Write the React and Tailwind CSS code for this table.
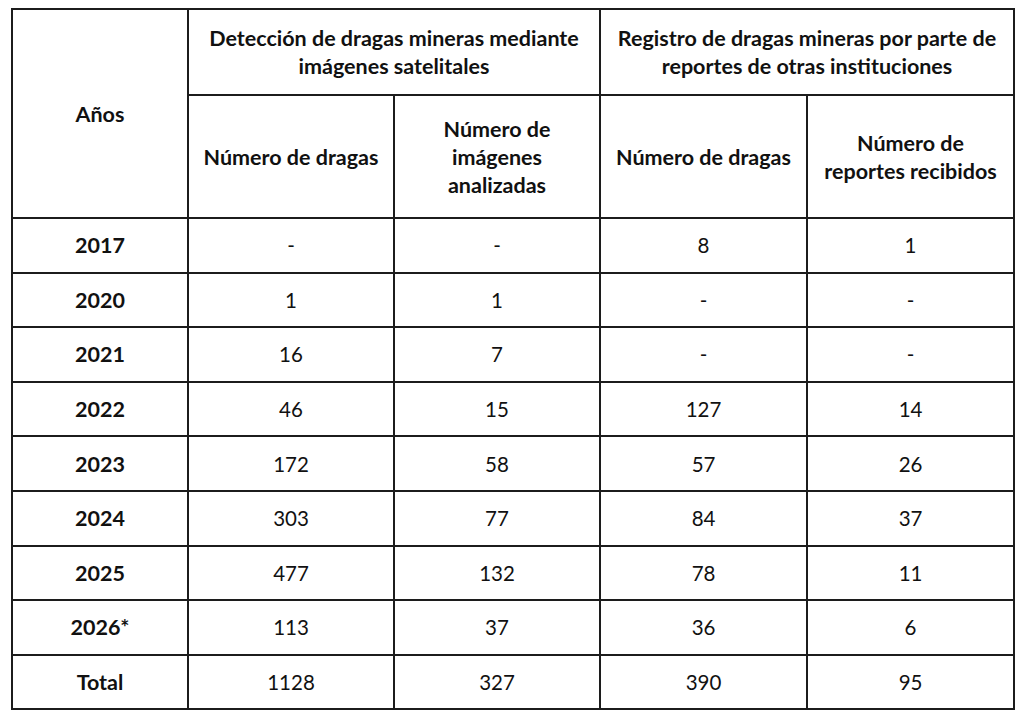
import React from "react";

const rows = [
  ["2017", "-", "-", "8", "1"],
  ["2020", "1", "1", "-", "-"],
  ["2021", "16", "7", "-", "-"],
  ["2022", "46", "15", "127", "14"],
  ["2023", "172", "58", "57", "26"],
  ["2024", "303", "77", "84", "37"],
  ["2025", "477", "132", "78", "11"],
  ["2026*", "113", "37", "36", "6"],
  ["Total", "1128", "327", "390", "95"],
];

const cell = "border-2 border-[#1c1c1c] text-center align-middle p-0";

export default function App() {
  return (
    <div
      className="w-[1024px] h-[717px] bg-white pt-[8px] pl-[11px] text-[#111] text-[20.5px] leading-[28px]"
      style={{ fontFamily: "Lato, 'Open Sans', sans-serif" }}
    >
      <table className="border-collapse table-fixed w-[1002px]">
        <colgroup>
          <col className="w-[176px]" />
          <col className="w-[206px]" />
          <col className="w-[206px]" />
          <col className="w-[207px]" />
          <col className="w-[207px]" />
        </colgroup>
        <thead className="font-bold text-[21.5px]">
          <tr className="h-[86px]">
            <th rowSpan={2} className={cell}>
              Años
            </th>
            <th colSpan={2} className={cell}>
              Detección de dragas mineras mediante
              <br />
              imágenes satelitales
            </th>
            <th colSpan={2} className={cell}>
              Registro de dragas mineras por parte de
              <br />
              reportes de otras instituciones
            </th>
          </tr>
          <tr className="h-[123px]">
            <th className={cell}>Número de dragas</th>
            <th className={cell}>
              Número de
              <br />
              imágenes
              <br />
              analizadas
            </th>
            <th className={cell}>Número de dragas</th>
            <th className={cell}>
              Número de
              <br />
              reportes recibidos
            </th>
          </tr>
        </thead>
        <tbody>
          {rows.map((r) => (
            <tr key={r[0]} className="h-[54.6px]">
              <td className={`${cell} font-bold text-[21.5px]`}>{r[0]}</td>
              {r.slice(1).map((v, i) => (
                <td key={i} className={cell}>
                  {v}
                </td>
              ))}
            </tr>
          ))}
        </tbody>
      </table>
    </div>
  );
}
